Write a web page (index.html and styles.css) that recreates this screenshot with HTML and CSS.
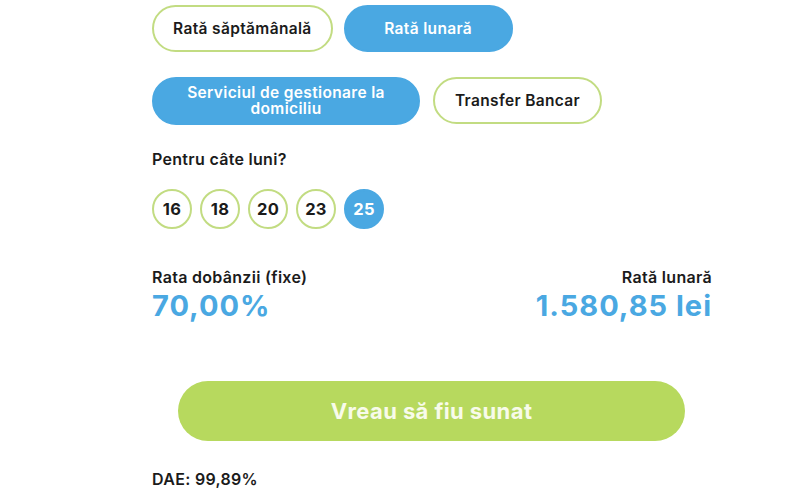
FILE: index.html
```html
<!DOCTYPE html>
<html lang="ro">
<head>
<meta charset="utf-8">
<title>Calculator credit</title>
<link rel="stylesheet" href="styles.css">
</head>
<body>
<main class="calc">
  <div class="options">
    <button class="pill">Rată săptămânală</button>
    <button class="pill pill-active">Rată lunară</button>
  </div>
  <div class="options options-second">
    <button class="pill pill-active pill-wide">Serviciul de gestionare la domiciliu</button>
    <button class="pill">Transfer Bancar</button>
  </div>

  <p class="label label-months">Pentru câte luni?</p>
  <div class="months">
    <button class="month">16</button>
    <button class="month">18</button>
    <button class="month">20</button>
    <button class="month">23</button>
    <button class="month month-active">25</button>
  </div>

  <div class="summary">
    <div class="summary-item">
      <p class="label">Rata dobânzii (fixe)</p>
      <p class="value">70,00%</p>
    </div>
    <div class="summary-item summary-item-right">
      <p class="label">Rată lunară</p>
      <p class="value">1.580,85 lei</p>
    </div>
  </div>

  <button class="cta">Vreau să fiu sunat</button>

  <p class="label dae">DAE: 99,89%</p>
</main>
</body>
</html>
```

FILE: styles.css
```css
* {
  box-sizing: border-box;
}

body {
  margin: 0;
  background: #ffffff;
  font-family: "Inter", "Liberation Sans", sans-serif;
  color: #1b1b1b;
}

.calc {
  width: 560px;
  margin-left: 152px;
  padding-top: 5px;
}

p {
  margin: 0;
}

button {
  font-family: inherit;
  cursor: pointer;
}

/* option pills */
.options {
  display: flex;
  gap: 11px;
}

.options-second {
  gap: 13px;
  margin-top: 25px;
}

.pill {
  min-width: 169px;
  height: 47px;
  padding: 0 19px;
  border: 2px solid #c2dc82;
  border-radius: 24px;
  background: #ffffff;
  color: #1b1b1b;
  font-size: 15.5px;
  font-weight: 600;
  letter-spacing: 0.35px;
  line-height: 16px;
}

.pill-active {
  border-color: #4aa8e2;
  background: #4aa8e2;
  color: #ffffff;
}

.pill-wide {
  width: 268px;
  height: 48px;
  padding: 0 28px;
}

/* labels */
.label {
  font-size: 16px;
  font-weight: 600;
  letter-spacing: 0.3px;
  line-height: 20px;
}

.label-months {
  margin-top: 24px;
}

/* month picker */
.months {
  display: flex;
  gap: 8px;
  margin-top: 20px;
}

.month {
  width: 40px;
  height: 40px;
  padding: 0;
  border: 2px solid #c2dc82;
  border-radius: 50%;
  background: #ffffff;
  color: #1b1b1b;
  font-size: 16.5px;
  font-weight: 700;
  letter-spacing: 0.3px;
}

.month-active {
  border-color: #4aa8e2;
  background: #4aa8e2;
  color: #ffffff;
}

/* interest + monthly rate */
.summary {
  display: flex;
  justify-content: space-between;
  margin-top: 38px;
}

.summary-item-right {
  text-align: right;
}

.value {
  margin-top: 3px;
  font-size: 29px;
  font-weight: 700;
  letter-spacing: 1px;
  line-height: 32px;
  color: #4aa8e2;
}

/* call to action */
.cta {
  display: block;
  width: 507px;
  height: 60px;
  margin: 59px 0 0 26px;
  border: 0;
  border-radius: 30px;
  background: #b7d95e;
  color: #f8fbea;
  font-size: 22px;
  font-weight: 700;
  letter-spacing: 0.4px;
}

.dae {
  margin-top: 28px;
}
```
